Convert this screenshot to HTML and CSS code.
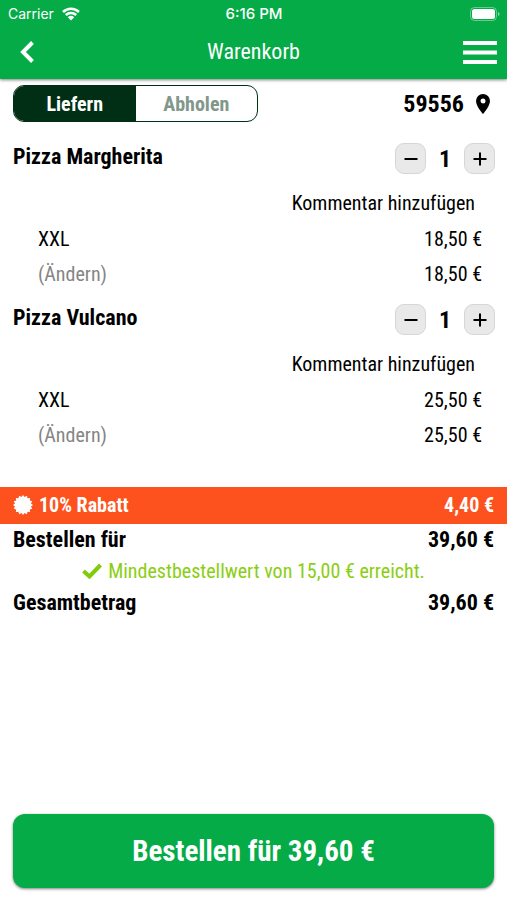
FILE: index.html
```html
<!DOCTYPE html>
<html lang="de">
<head>
  <meta charset="UTF-8" />
  <meta name="viewport" content="width=device-width, initial-scale=1" />
  <title>Warenkorb</title>
  <link rel="stylesheet" href="styles.css">
</head>
<body>
  <header class="app-header">
    <div class="status-bar">
      <div class="carrier">
        <span>Carrier</span>
        <svg class="wifi-icon" viewBox="0 0 18 14" aria-hidden="true">
          <path d="M1 5a11.5 11.5 0 0 1 16 0" />
          <path d="M3.800 8a7.500 7.500 0 0 1 10.400 0" />
          <path class="wifi-dot" d="M9 13.500 5.800 10.200a4.500 4.500 0 0 1 6.400 0z" />
        </svg>
      </div>
      <time class="clock">6:16 PM</time>
      <svg class="battery-icon" viewBox="0 0 30 14" aria-hidden="true">
        <rect class="battery-case" x="0.500" y="0.500" width="26" height="13" rx="4" />
        <rect x="2" y="2" width="23" height="10" rx="2.500" />
        <path class="battery-tip" d="M28 5c2 .6 2 3.400 0 4z" />
      </svg>
    </div>
    <nav class="nav-bar">
      <button class="icon-button" aria-label="Zurück">
        <svg class="back-icon" viewBox="0 0 14 22" aria-hidden="true"><path d="M12.500 1.500 3 11l9.500 9.500" /></svg>
      </button>
      <h1>Warenkorb</h1>
      <button class="icon-button menu-button" aria-label="Menü">
        <svg class="menu-icon" viewBox="0 0 34 23" aria-hidden="true"><path d="M0 2h34M0 11.500h34M0 21h34" /></svg>
      </button>
    </nav>
  </header>

  <main>
    <div class="order-bar">
      <div class="order-type" role="group" aria-label="Bestellart">
        <button class="active" aria-pressed="true">Liefern</button>
        <button aria-pressed="false">Abholen</button>
      </div>
      <button class="location">
        <span>59556</span>
        <svg class="pin-icon" viewBox="0 0 14 20" aria-hidden="true"><path fill-rule="evenodd" d="M7 0a7 7 0 0 0-7 7c0 5.200 7 13 7 13s7-7.800 7-13a7 7 0 0 0-7-7zm0 4.500a2.500 2.500 0 1 1 0 5 2.500 2.500 0 0 1 0-5z" /></svg>
      </button>
    </div>

    <section class="cart-item">
      <div class="item-head">
        <h2>Pizza Margherita</h2>
        <div class="quantity">
          <button aria-label="Weniger"><svg viewBox="0 0 14 14" aria-hidden="true"><path d="M.5 7h13" /></svg></button>
          <span>1</span>
          <button aria-label="Mehr"><svg viewBox="0 0 14 14" aria-hidden="true"><path d="M.5 7h13M7 .5v13" /></svg></button>
        </div>
      </div>
      <div class="comment-row"><button class="text-button">Kommentar hinzufügen</button></div>
      <div class="item-row"><span>XXL</span><span>18,50 €</span></div>
      <div class="item-row"><button class="text-button muted">(Ändern)</button><span>18,50 €</span></div>
    </section>

    <section class="cart-item">
      <div class="item-head">
        <h2>Pizza Vulcano</h2>
        <div class="quantity">
          <button aria-label="Weniger"><svg viewBox="0 0 14 14" aria-hidden="true"><path d="M.5 7h13" /></svg></button>
          <span>1</span>
          <button aria-label="Mehr"><svg viewBox="0 0 14 14" aria-hidden="true"><path d="M.5 7h13M7 .5v13" /></svg></button>
        </div>
      </div>
      <div class="comment-row"><button class="text-button">Kommentar hinzufügen</button></div>
      <div class="item-row"><span>XXL</span><span>25,50 €</span></div>
      <div class="item-row"><button class="text-button muted">(Ändern)</button><span>25,50 €</span></div>
    </section>

    <div class="discount">
      <svg class="badge-icon" viewBox="-10 -10 20 20" aria-hidden="true">
        <path d="M0-10 1.600-8 3.800-9.200 4.600-6.800 7.100-7.100 6.800-4.600 9.200-3.800 8-1.600 10 0 8 1.600 9.200 3.800 6.800 4.600 7.100 7.100 4.600 6.800 3.800 9.200 1.600 8 0 10-1.600 8-3.800 9.200-4.600 6.800-7.100 7.100-6.800 4.600-9.200 3.800-8 1.600-10 0-8-1.600-9.200-3.800-6.800-4.600-7.100-7.100-4.600-6.800-3.800-9.200-1.600-8z" />
      </svg>
      <span>10% Rabatt</span>
      <span class="amount">4,40 €</span>
    </div>

    <div class="total-row"><span>Bestellen für</span><span>39,60 €</span></div>
    <p class="minimum">
      <svg class="check-icon" viewBox="0 0 20 16" aria-hidden="true"><path d="M1.500 8 7.500 13.500 18.500 2" /></svg>
      <span>Mindestbestellwert von 15,00 € erreicht.</span>
    </p>
    <div class="total-row"><span>Gesamtbetrag</span><span>39,60 €</span></div>
  </main>

  <footer class="checkout">
    <button class="checkout-button">Bestellen für 39,60 €</button>
  </footer>
</body>
</html>
```
FILE: styles.css
```css
* {
  box-sizing: border-box;
}

body {
  margin: 0;
  min-height: 100vh;
  display: flex;
  flex-direction: column;
  font-family: 'Roboto Condensed', 'Liberation Sans Narrow', Roboto, sans-serif;
  font-size: 20px;
  line-height: 24px;
  color: #000;
  background-color: #fff;
}

button {
  margin: 0;
  padding: 0;
  border: 0;
  font: inherit;
  color: inherit;
  background: none;
  cursor: pointer;
}

svg {
  display: block;
}

h1,
h2,
p {
  margin: 0;
}

/* Header */
.app-header {
  color: #fff;
  background-color: #04ab46;
  box-shadow: 0 1px 3px rgba(0, 0, 0, 0.5);
}

.status-bar {
  display: grid;
  grid-template-columns: 1fr auto 1fr;
  align-items: center;
  height: 27px;
  padding: 0 7px 0 8px;
  font-family: Inter, Roboto, sans-serif;
  font-size: 14px;
}

.carrier {
  display: flex;
  align-items: center;
  gap: 8px;
}

.wifi-icon {
  width: 18px;
  height: 14px;
  fill: none;
  stroke: #fff;
  stroke-width: 2.5;
}

.wifi-icon .wifi-dot {
  fill: #fff;
  stroke: none;
}

.clock {
  font-size: 15px;
  font-weight: 500;
}

.battery-icon {
  justify-self: end;
  width: 30px;
  height: 14px;
  fill: #fff;
}

.battery-case {
  fill: none;
  stroke: #fff;
  opacity: 0.4;
}

.battery-tip {
  opacity: 0.5;
}

.nav-bar {
  display: grid;
  grid-template-columns: 1fr auto 1fr;
  align-items: center;
  height: 52px;
  padding: 0 10px 2px;
}

h1 {
  font-size: 22px;
  font-weight: 400;
}

.icon-button {
  justify-self: start;
  padding-left: 10px;
}

.menu-button {
  justify-self: end;
}

.back-icon {
  width: 14px;
  height: 22px;
  fill: none;
  stroke: #fff;
  stroke-width: 4;
}

.menu-icon {
  width: 34px;
  height: 23px;
  stroke: #fff;
  stroke-width: 4;
}

/* Delivery or pickup */
.order-bar {
  display: flex;
  align-items: center;
  justify-content: space-between;
  padding: 6px 17px 0 13px;
}

.order-type {
  display: grid;
  grid-template-columns: 1fr 1fr;
  width: 245px;
  height: 37px;
  overflow: hidden;
  border: 1px solid #012f15;
  border-radius: 11px;
  font-weight: 700;
  color: #81978a;
}

.order-type .active {
  color: #fff;
  background-color: #012f15;
}

.location {
  display: flex;
  align-items: center;
  gap: 12px;
  font-size: 24px;
  font-weight: 700;
}

.pin-icon {
  width: 14px;
  height: 20px;
}

/* Cart items */
.cart-item {
  padding: 21px 12px 0 13px;
}

.cart-item + .cart-item {
  padding-top: 13px;
}

.item-head {
  display: flex;
  align-items: flex-start;
  justify-content: space-between;
  height: 42px;
}

h2,
.total-row {
  font-size: 22px;
  font-weight: 700;
}

h2 {
  padding-top: 2px;
}

.quantity {
  display: flex;
  align-items: center;
  font-size: 24px;
  font-weight: 700;
}

.quantity span {
  width: 38px;
  text-align: center;
}

.quantity button {
  display: grid;
  place-items: center;
  width: 31px;
  height: 31px;
  border: 1px solid #d6d6d6;
  border-radius: 9px;
  background-color: #e9e9e9;
}

.quantity svg {
  width: 14px;
  height: 14px;
  stroke: #000;
  stroke-width: 2;
}

.comment-row {
  display: flex;
  justify-content: flex-end;
  align-items: center;
  height: 36px;
  padding-right: 20px;
}

.item-row {
  display: flex;
  justify-content: space-between;
  align-items: center;
  height: 35px;
  padding: 0 13px 0 25px;
}

.muted {
  color: #858585;
}

/* Totals */
.discount {
  display: flex;
  align-items: center;
  gap: 6px;
  height: 37px;
  margin-top: 35px;
  padding: 0 13px 2px;
  font-weight: 700;
  color: #fff;
  background-color: #fd521d;
}

.badge-icon {
  width: 20px;
  height: 20px;
  fill: #fff;
}

.amount {
  margin-left: auto;
}

.total-row {
  display: flex;
  justify-content: space-between;
  align-items: center;
  height: 31px;
  padding: 0 13px;
}

.minimum {
  display: flex;
  align-items: center;
  justify-content: center;
  gap: 6px;
  height: 32px;
  color: #8ace12;
}

.check-icon {
  width: 20px;
  height: 16px;
  fill: none;
  stroke: #81cb0b;
  stroke-width: 4;
}

.checkout {
  margin-top: auto;
  padding: 12px 13px;
}

.checkout-button {
  width: 100%;
  height: 74px;
  border-radius: 12px;
  font-size: 29px;
  font-weight: 700;
  color: #fff;
  background-color: #04ab46;
  box-shadow: 0 1px 3px rgba(0, 0, 0, 0.5);
}
```
